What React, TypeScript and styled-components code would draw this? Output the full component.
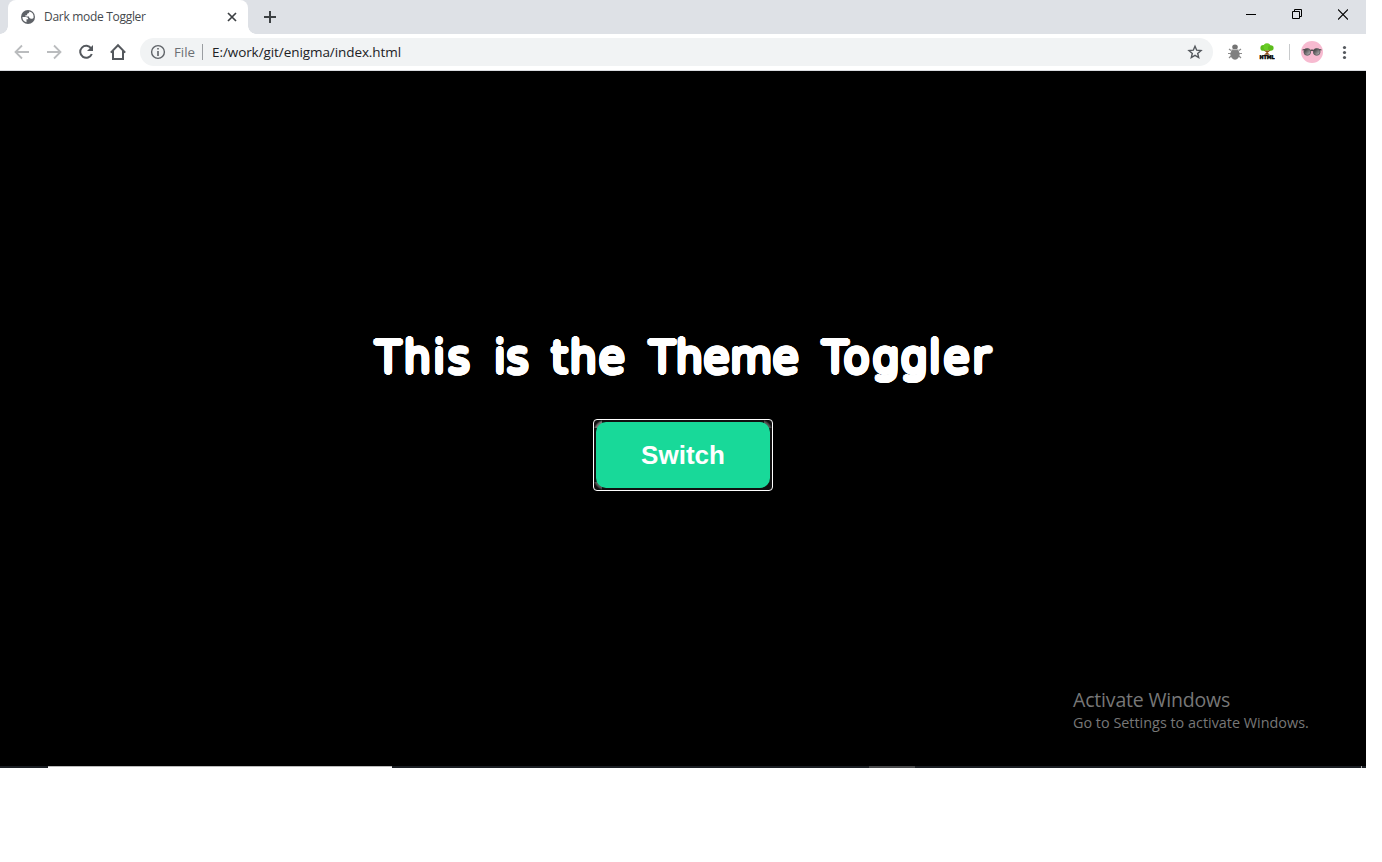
import React from "react";
import styled, { createGlobalStyle } from "styled-components";

const Global = createGlobalStyle`
  * { box-sizing: border-box; }
  body { margin: 0; background: #fff; font-family: "Segoe UI", "Open Sans", "Noto Sans", sans-serif; }
`;
const Desktop = styled.main`
  width: 1366px; height: 768px; display: flex; flex-direction: column; position: relative; background: #000; overflow: hidden;
`;
const TabStrip = styled.header`
  height: 34px; display: flex; background: #dee1e6; padding-left: 8px; flex: none;
`;
const Tab = styled.div`
  width: 240px; height: 34px; background: #fff; border-radius: 8px 8px 0 0; display: flex; align-items: center; padding: 0 10px 0 12px; position: relative;
  &::before, &::after { content: ""; position: absolute; bottom: 0; width: 8px; height: 8px; }
  &::before { left: -8px; background: radial-gradient(circle at 0 0, transparent 7.5px, #fff 8px); }
  &::after { right: -8px; background: radial-gradient(circle at 100% 0, transparent 7.5px, #fff 8px); }
`;
const TabTitle = styled.span`
  flex: 1; margin-left: 8px; font-size: 12px; letter-spacing: -0.3px; color: #45494d; line-height: 16px; white-space: nowrap;
`;
const NewTab = styled.div`
  width: 44px; display: flex; align-items: center; justify-content: center;
`;
const WindowButtons = styled.div`
  margin-left: auto; height: 29px; display: flex;
`;
const WindowButton = styled.div`
  width: 46px; display: flex; align-items: center; justify-content: center;
`;
const Toolbar = styled.nav`
  height: 37px; flex: none; display: flex; align-items: center; background: #fff; border-bottom: 1px solid #dadce0; padding: 0 12px 0 12px;
`;
const NavButtons = styled.div`
  display: flex; gap: 12px; width: 128px;
`;
const AddressBar = styled.div`
  width: 1073px; height: 28px; border-radius: 14px; background: #f1f3f4; display: flex; align-items: center; padding: 0 10px; font-size: 14px; color: #202124;
`;
const Scheme = styled.span`
  width: 28px; margin-left: 8px; color: #6b6f73; font-size: 13.3px; line-height: 18px; padding-right: 7px;
`;
const Divider = styled.i<{ $color: string; $gap: number }>`
  width: 1px; height: 16px; background: ${(p) => p.$color}; margin-right: ${(p) => p.$gap}px;
`;
const Url = styled.span`
  flex: 1; font-size: 13.5px; letter-spacing: -0.08px; line-height: 18px;
`;
const Extensions = styled.div`
  display: flex; align-items: center; margin-left: 14px;
`;
const Slot = styled.div<{ $gap: number }>`
  display: flex; margin-right: ${(p) => p.$gap}px;
`;
const Page = styled.section`
  flex: 1; display: flex; flex-direction: column; align-items: center; background: #000; padding-top: 256px;
`;
// Rings of offsets thicken the thin letters evenly and give them rounded ends.
const roundStroke = [1.4, 2.75]
  .flatMap((radius) =>
    Array.from({ length: 20 }, (_, i) => {
      const angle = (i / 20) * Math.PI * 2;
      return `${(Math.cos(angle) * radius).toFixed(2)}px ${(Math.sin(angle) * radius).toFixed(2)}px 0 #fff`;
    })
  )
  .join(", ");
const Title = styled.h1`
  margin: 0; width: 616px; height: 64px; display: flex; color: #fff;
  font: 200 43px/61px "DejaVu Sans", "DejaVu Sans Light", sans-serif;
  text-shadow: ${roundStroke};
`;
const Word = styled.span<{ $width: number; $tracking: number }>`
  flex: none; width: ${(p) => p.$width}px; letter-spacing: ${(p) => p.$tracking}px; white-space: nowrap;
`;
const SwitchButton = styled.button`
  display: block; width: 174px; height: 66px; padding: 0; border: 0; border-radius: 10px; background: #18d999; color: #fff;
  font: bold 26px/66px "Liberation Sans", Arial, sans-serif;
`;
const FocusRing = styled.div`
  width: 180px; height: 72px; margin-top: 28px; border: 1px solid #fff; border-radius: 4px; padding: 2px;
  background:
    radial-gradient(circle at 12px 12px, #777 11px, transparent 13px) 0 0 / 8px 8px no-repeat,
    radial-gradient(circle at -4px 12px, #555 11px, transparent 13px) 100% 0 / 8px 8px no-repeat,
    radial-gradient(circle at 12px -4px, #555 11px, transparent 13px) 0 100% / 8px 8px no-repeat,
    #101010;
  background-origin: padding-box;
`;
const Watermark = styled.aside`
  position: absolute; left: 1073px; top: 687px; color: #777; white-space: nowrap;
`;
const WatermarkTitle = styled.div`
  font-size: 19.5px; line-height: 26px; letter-spacing: -0.18px;
`;
const WatermarkText = styled.div`
  font-size: 14.4px; line-height: 20px;
`;
const Taskbar = styled.footer`
  height: 2px; flex: none; display: flex; background: #1b1f24;
`;
const TaskSegment = styled.i<{ $width: number; $color: string; $gap: number }>`
  width: ${(p) => p.$width}px; height: 2px; margin-left: ${(p) => p.$gap}px; background: ${(p) => p.$color};
`;

const words = [
  { text: "This", width: 119, tracking: 2.4 },
  { text: "is", width: 57, tracking: 0.5 },
  { text: "the", width: 98, tracking: 1.7 },
  { text: "Theme", width: 173, tracking: 0.4 },
  { text: "Toggler", width: 169, tracking: 2.5 },
];

const Globe = () => (
  <svg width="16" height="16" viewBox="0 0 16 16">
    <circle cx="8" cy="8" r="7" fill="#5f6368" />
    <path d="M2.4 8h3.4c1.5 0 2.4.8 2.4 2.3H6.5v3A5.6 5.6 0 0 1 2.4 8ZM9.3 2.6c0 1.5-.8 2-2.2 2.2v1.5H5.4v1.3H9c0 1.5.8 2.1 2.2 2.1h1.1c.7 0 1.1-.5 1.3-1.2A5.6 5.6 0 0 0 9.3 2.6Z" fill="#fff" />
  </svg>
);
const Back = () => (
  <svg width="20" height="20" viewBox="0 0 20 20" fill="none" stroke="#babcbe" strokeWidth="1.8"><path d="M17 10H4M10 3.5 3.5 10l6.5 6.5" /></svg>
);
const Forward = () => (
  <svg width="20" height="20" viewBox="0 0 20 20" fill="none" stroke="#babcbe" strokeWidth="1.8"><path d="M3 10h13M10 3.5l6.5 6.5-6.5 6.5" /></svg>
);
const Reload = () => (
  <svg width="20" height="20" viewBox="0 0 20 20" fill="none"><path d="M15.2 6.5A6 6 0 1 0 15.8 12" stroke="#54585d" strokeWidth="2" /><path d="M17 3v6h-6z" fill="#54585d" /></svg>
);
const Home = () => (
  <svg width="20" height="20" viewBox="0 0 20 20" fill="none" stroke="#54585d" strokeWidth="2"><path d="M2.8 10.6 10 3.2l7.2 7.4M5 9v8h10V9" /></svg>
);
const Info = () => (
  <svg width="16" height="16" viewBox="0 0 16 16" fill="none" stroke="#5f6368"><circle cx="8" cy="8" r="6.4" strokeWidth="1.4" /><path d="M8 7v5M8 4v1.6" strokeWidth="1.6" /></svg>
);
const Star = () => (
  <svg width="16" height="16" viewBox="0 0 16 16" fill="none" stroke="#54585d" strokeWidth="1.4"><path d="m8 2.2 1.7 4 4.3.4-3.3 2.8 1 4.2L8 11.4l-3.7 2.2 1-4.2L2 6.6l4.3-.4Z" /></svg>
);
const Bug = () => (
  <svg width="16" height="16" viewBox="0 0 16 16">
    <path d="M4 6.5 2 5M12 6.5 14 5M4 9.5H1M12 9.5h3M4 12l-2 2M12 12l2 2" stroke="#8b8b8b" strokeWidth="1.2" />
    <ellipse cx="8" cy="10.2" rx="4.6" ry="5.5" fill="#808080" /><ellipse cx="8" cy="2.9" rx="2.8" ry="2.5" fill="#747474" /><path d="M4.4 5.6h7.2" stroke="#c4c4c4" />
  </svg>
);
const TreeLabel = styled.text`
  font: 900 5.2px "DejaVu Sans", sans-serif; stroke: #000; stroke-width: .5px;
`;
const Tree = () => (
  <svg width="16" height="18" viewBox="0 0 16 18">
    <path d="M8 7v4M8 9.5l3.5-3M8 9 5 7" stroke="#8a4b14" strokeWidth="1.2" /><path d="M5 11.8 7 10h2l2 1.8Z" fill="#8a4b14" />
    <circle cx="4.3" cy="4.9" r="2.9" fill="#5bbc1b" /><circle cx="8" cy="3.8" r="3.6" fill="#68cc25" /><circle cx="11.8" cy="5" r="2.8" fill="#5bbc1b" />
    <TreeLabel x="0.4" y="16.4" textLength="15.2" lengthAdjust="spacingAndGlyphs">HTML</TreeLabel>
  </svg>
);
const Avatar = () => (
  <svg width="22" height="22" viewBox="0 0 22 22">
    <defs><linearGradient id="lens" x2="1" y2="1"><stop stopColor="#252525" /><stop offset="1" stopColor="#c9c5c8" /></linearGradient></defs>
    <circle cx="11" cy="11" r="11" fill="#f7bad0" />
    <path d="M1.5 9 5 8.4M20.5 9 17 8.4M9 9.8q2-1.4 4 0" stroke="#403d3f" strokeWidth="1.1" fill="none" />
    <circle cx="6.3" cy="10.9" r="3.4" fill="url(#lens)" stroke="#5b585a" strokeWidth=".8" /><circle cx="15.7" cy="10.9" r="3.4" fill="url(#lens)" stroke="#5b585a" strokeWidth=".8" />
  </svg>
);

export default function App() {
  return (
    <>
      <Global />
      <Desktop>
        <TabStrip>
          <Tab>
            <Globe />
            <TabTitle>Dark mode Toggler</TabTitle>
            <svg width="12" height="12" viewBox="0 0 12 12" stroke="#3c4043" strokeWidth="1.7"><path d="m2 2 8 8m0-8-8 8" /></svg>
          </Tab>
          <NewTab><svg width="14" height="14" viewBox="0 0 14 14" stroke="#3c4043" strokeWidth="2"><path d="M7 1v12M1 7h12" /></svg></NewTab>
          <WindowButtons>
            <WindowButton><svg width="10" height="11" viewBox="0 0 10 11" stroke="#000"><path d="M0 5.5h10" /></svg></WindowButton>
            <WindowButton><svg width="10" height="11" viewBox="0 0 10 11" stroke="#000" fill="none"><path d="M.5 2.5h7v7h-7zM2.5 2.5v-2h7v7h-2" /></svg></WindowButton>
            <WindowButton><svg width="10" height="11" viewBox="0 0 10 11" stroke="#000" strokeWidth="1.1"><path d="m0 .5 10 10M10 .5l-10 10" /></svg></WindowButton>
          </WindowButtons>
        </TabStrip>
        <Toolbar>
          <NavButtons><Back /><Forward /><Reload /><Home /></NavButtons>
          <AddressBar>
            <Info /><Scheme>File</Scheme><Divider $color="#9a9da1" $gap={9} />
            <Url>E:/work/git/enigma/index.html</Url><Star />
          </AddressBar>
          <Extensions>
            <Slot $gap={16}><Bug /></Slot>
            <Slot $gap={14}><Tree /></Slot>
            <Divider $color="#c8cacc" $gap={11} />
            <Slot $gap={13}><Avatar /></Slot>
            <svg width="16" height="16" viewBox="0 0 16 16" fill="#54585d"><circle cx="8.5" cy="3.5" r="1.6" /><circle cx="8.5" cy="8.5" r="1.6" /><circle cx="8.5" cy="13.5" r="1.6" /></svg>
          </Extensions>
        </Toolbar>
        <Page>
          <Title>{words.map((w) => <Word key={w.text} $width={w.width} $tracking={w.tracking}>{w.text}</Word>)}</Title>
          <FocusRing><SwitchButton>Switch</SwitchButton></FocusRing>
        </Page>
        <Taskbar>
          <TaskSegment $width={344} $color="linear-gradient(#bbb 50%, #fff 50%)" $gap={48} />
          <TaskSegment $width={46} $color="#48494b" $gap={477} />
          <TaskSegment $width={1} $color="#aaa" $gap={446} />
        </Taskbar>
        <Watermark>
          <WatermarkTitle>Activate Windows</WatermarkTitle>
          <WatermarkText>Go to Settings to activate Windows.</WatermarkText>
        </Watermark>
      </Desktop>
    </>
  );
}
